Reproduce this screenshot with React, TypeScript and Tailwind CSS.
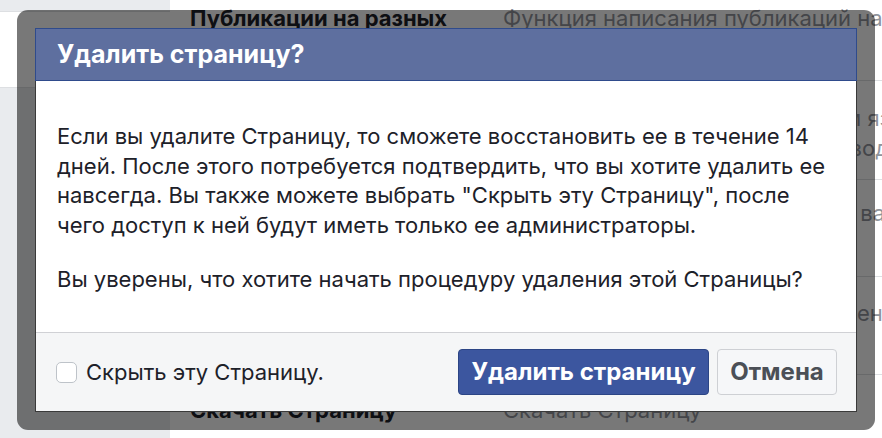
import React from "react";

const font = { fontFamily: '"Inter", "Noto Sans", "Liberation Sans", sans-serif' };

function BgRow({ label, children, className = "" }: { label: string; children: React.ReactNode; className?: string }) {
  return (
    <div className={`flex border-b border-[#dddfe2] ${className}`}>
      <div className="w-[333px] shrink-0 pl-[20px] pt-[6px] pr-[30px] text-[22px] font-bold text-[#1d2129] leading-[24px]">
        {label}
      </div>
      <div className="flex-1 min-w-0 text-[22px] text-[#90949c] leading-[30px] whitespace-nowrap">{children}</div>
    </div>
  );
}

export default function App() {
  return (
    <div className="relative w-[882px] h-[438px] overflow-hidden bg-white" style={font}>
      {/* page behind the dialog */}
      <div className="flex h-full">
        <div className="w-[170px] shrink-0 bg-[#e9ebee] pt-[11px]">
          <div className="h-[77px] bg-white border-y border-[#dddfe2]" />
        </div>
        <div className="flex-1 min-w-0 flex flex-col">
          <BgRow label="Публикации на разных языках" className="h-[81px]">
            <div className="pt-[3px] overflow-hidden">Функция написания публикаций на разных языках</div>
          </BgRow>
          <BgRow label="Переводы" className="h-[99px]">
            <div className="pt-[22px] text-right -mr-[49px]">Показывать на родном языке</div>
            <div className="text-right -mr-[7px]">Автоматический перевод</div>
          </BgRow>
          <BgRow label="Рекомендации" className="h-[97px]">
            <div className="pt-[18px] text-right -mr-[20px]">Показывать тем, кому вам</div>
          </BgRow>
          <BgRow label="Модерация" className="h-[98px]">
            <div className="pt-[21px] text-right -mr-[26px]">Скрывать мнения</div>
          </BgRow>
          <div className="flex pt-[23px]">
            <div className="w-[333px] shrink-0 pl-[20px] text-[22px] font-bold text-[#1d2129] leading-[24px]">Скачать Страницу</div>
            <div className="flex-1 text-[22px] text-[#90949c] leading-[24px]">Скачать Страницу</div>
          </div>
        </div>
      </div>

      {/* dim frame + dialog */}
      <div className="absolute left-[17px] top-[10px] w-[858px] h-[420px] rounded-[11px] bg-black/[0.53] p-[18px]">
        <div className="flex flex-col h-full border border-[#3a3a3a] bg-white">
          <div className="h-[53px] bg-[#5e6f9f] border border-[#2f4b8c] -m-px mb-0 flex items-center pl-[21px]">
            <span className="text-white text-[25px] font-bold">Удалить страницу?</span>
          </div>
          <div className="flex-1 pl-[21px] pr-[18px] pt-[41px] text-[22px] leading-[29.5px] text-[#1d2129]">
            <p>
              Если вы удалите Страницу, то сможете восстановить ее в течение 14 дней. После этого потребуется подтвердить,
              что вы хотите удалить ее навсегда. Вы также можете выбрать "Скрыть эту Страницу", после чего доступ к ней
              будут иметь только ее администраторы.
            </p>
            <p className="mt-[25px]">Вы уверены, что хотите начать процедуру удаления этой Страницы?</p>
          </div>
          <div className="h-[79px] bg-[#f5f6f7] border-t border-[#d0d1d5] flex items-center pl-[20px] pr-[19px]">
            <label className="flex items-center gap-[9px] text-[22px] text-[#1d2129]">
              <span className="w-[21px] h-[21px] rounded-[5px] border border-[#bec3c9] bg-white" />
              <span>Скрыть эту Страницу.</span>
            </label>
            <div className="ml-auto flex gap-[8px]">
              <button className="h-[46px] w-[251px] rounded-[4px] bg-[#3c569f] border border-[#2c4585] text-white text-[24px] font-bold">
                Удалить страницу
              </button>
              <button className="h-[46px] w-[120px] rounded-[4px] bg-[#f6f7f9] border border-[#ced0d4] text-[#4b4f56] text-[24px] font-bold">
                Отмена
              </button>
            </div>
          </div>
        </div>
      </div>
    </div>
  );
}
